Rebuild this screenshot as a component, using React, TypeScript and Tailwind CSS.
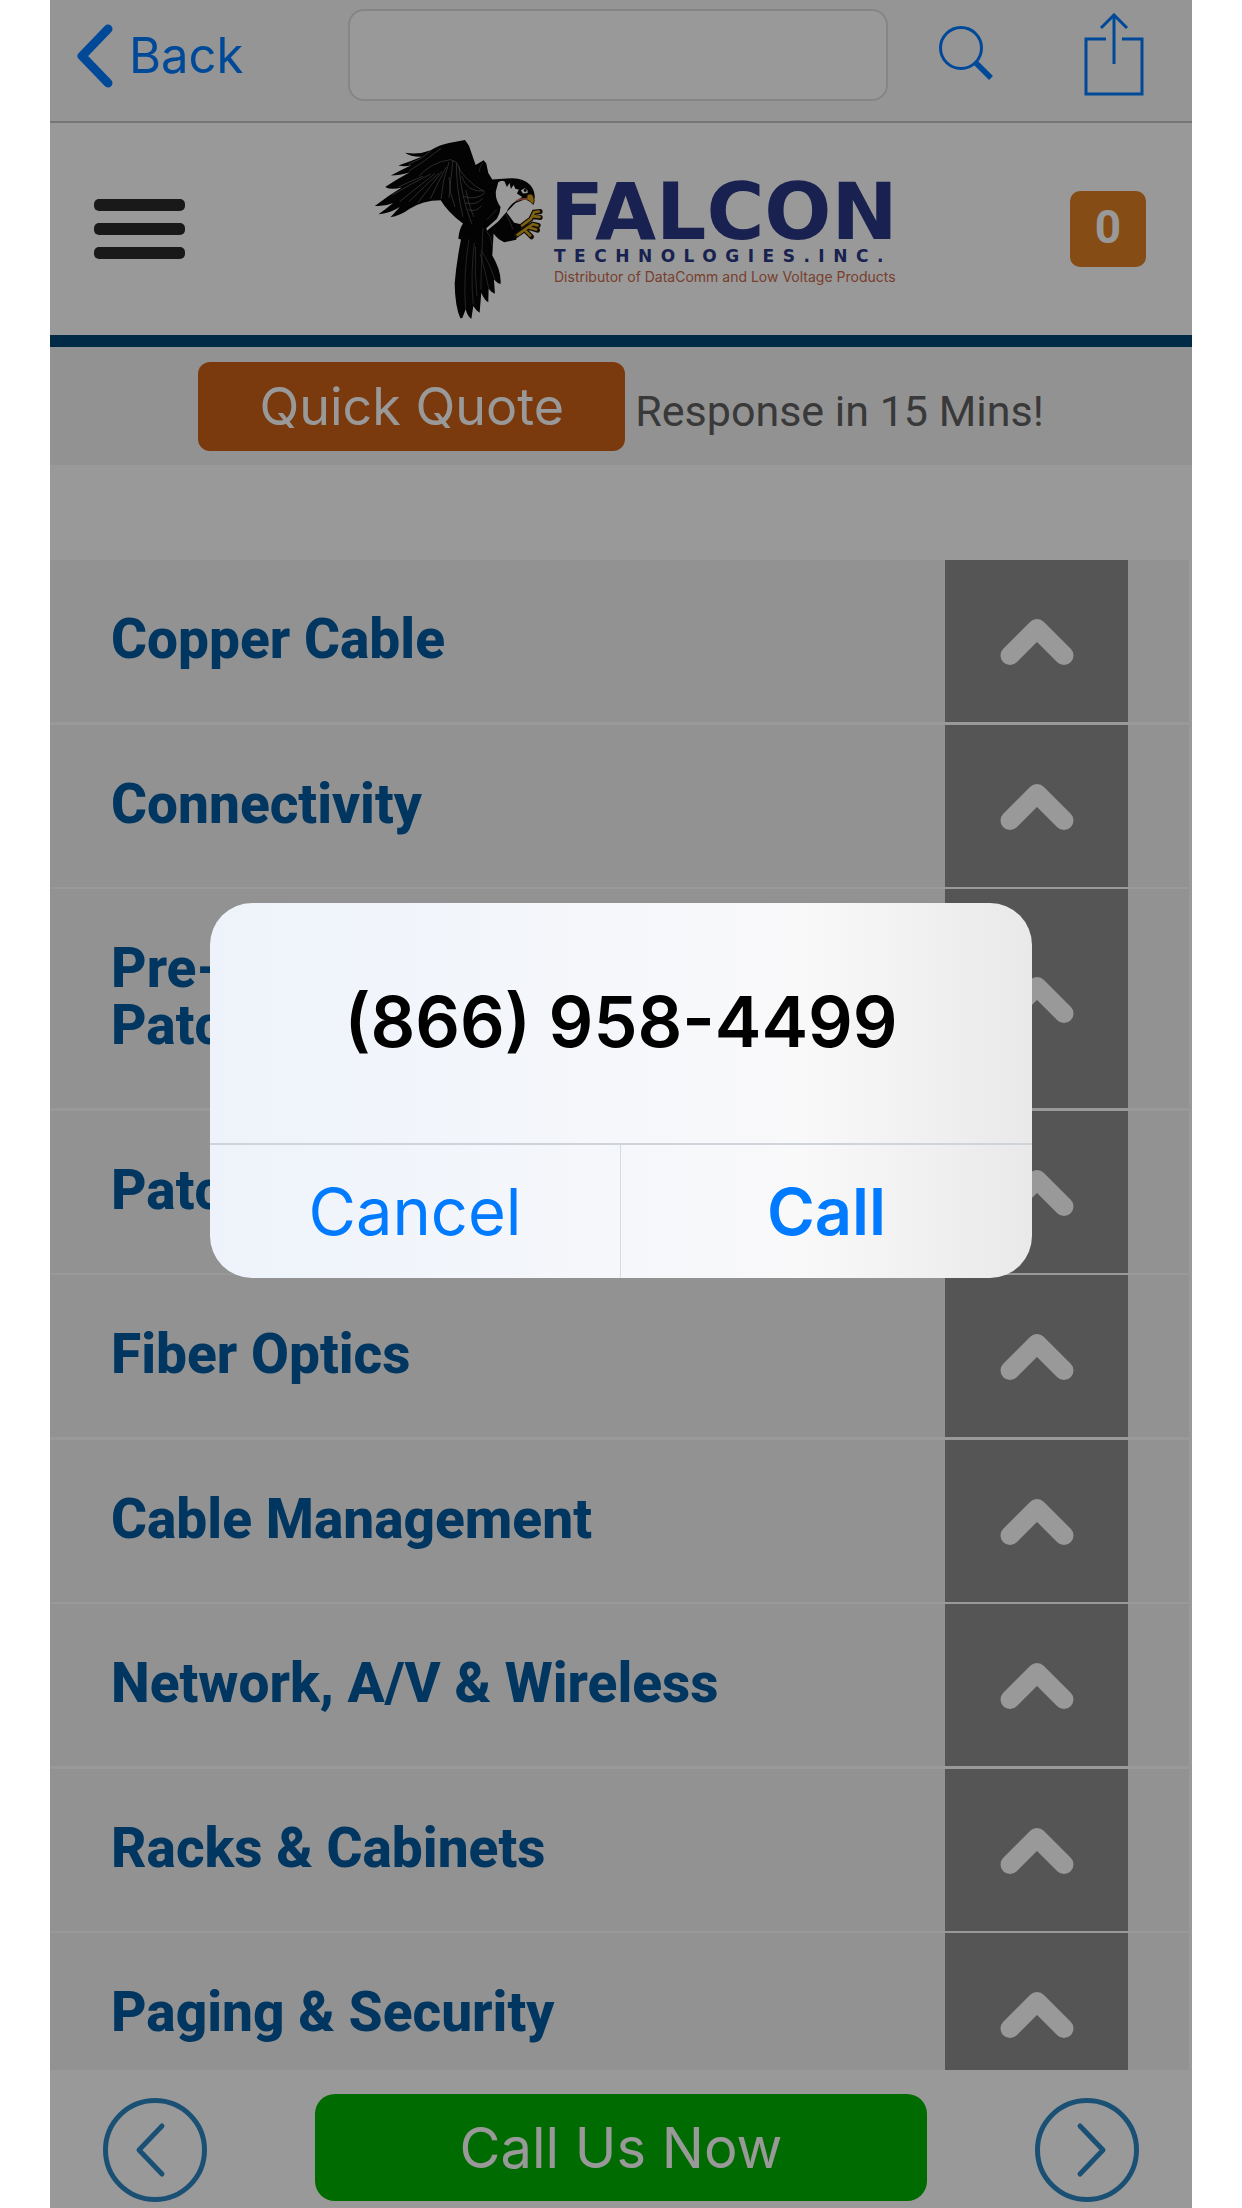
import React from "react";

const categories: string[][] = [
  ["Copper Cable"],
  ["Connectivity"],
  ["Pre-", "Patch"],
  ["Patch"],
  ["Fiber Optics"],
  ["Cable Management"],
  ["Network, A/V & Wireless"],
  ["Racks & Cabinets"],
  ["Paging & Security"],
];

function BrowserBar() {
  return (
    <div className="flex h-[123px] shrink-0 items-start border-b-2 border-[#c4c4c4] bg-[#f8f8f8] pl-[25px] pr-[48px] text-[#007aff]">
      <button type="button" className="flex w-[273px] items-center gap-4 pt-[23px] text-left font-['Inter',sans-serif] text-[49px] leading-[66px]">
        <svg viewBox="0 0 38 66" className="h-[66px] w-[38px]" fill="none" stroke="currentColor" strokeWidth="9" strokeLinecap="round" strokeLinejoin="round" aria-hidden="true">
          <path d="M33 6 L7 33 L33 60" />
        </svg>
        <span>Back</span>
      </button>
      <input
        type="text"
        aria-label="Address"
        className="mt-[9px] h-[92px] min-w-0 flex-1 rounded-[16px] border-2 border-[#dedede] bg-white px-6 text-[40px] outline-none"
      />
      <button type="button" aria-label="Search" className="ml-[50px] pt-[25px]">
        <svg viewBox="0 0 56 56" className="size-[56px]" fill="none" stroke="currentColor" aria-hidden="true">
          <circle cx="23" cy="23" r="20.5" strokeWidth="3" />
          <path d="M37 37 L53 53" strokeWidth="5.5" />
        </svg>
      </button>
      <button type="button" aria-label="Share" className="ml-[90px] pt-[13px]">
        <svg viewBox="0 0 60 84" className="h-[84px] w-[60px]" fill="none" stroke="currentColor" strokeWidth="3" aria-hidden="true">
          <path d="M22 26 H2 V81 H58 V26 H38" />
          <path d="M30 51 V3" />
          <path d="M17 15 L30 2 L43 15" />
        </svg>
      </button>
    </div>
  );
}

function Falcon() {
  return (
    <svg viewBox="45 28 510 544" className="h-[181px] w-[170px] shrink-0" aria-hidden="true">
      <path
        fill="#050505"
        d="M318 31 L270 40 Q240 46 215 62 Q180 76 138 69 Q155 82 188 81 Q150 96 118 108 Q140 112 158 106 Q120 124 95 138 Q120 138 152 128 Q112 150 78 172 Q95 182 128 174 Q85 200 47 229 Q75 232 102 220 Q78 240 58 254 Q90 252 122 232 Q106 250 94 263 Q122 260 152 238 Q190 212 245 212 Q268 250 312 282 Q300 300 298 328 L306 330 Q292 400 287 462 Q288 530 304 567 L310 566 L320 540 Q326 562 337 569 L343 530 Q352 545 362 550 L367 490 Q376 512 388 519 L389 478 Q398 490 408 493 L405 450 Q416 462 425 464 Q428 425 400 378 L404 312 Q416 330 436 338 L472 331 L476 308 L490 304 L486 284 L466 280 L450 258 L443 248 L470 220 L500 208 L528 206 Q528 182 514 166 Q492 144 456 146 L400 150 L388 130 L382 102 L374 92 L350 106 L330 48 Z"
      />
      <path
        fill="#fff"
        d="M418 158 Q428 150 437 156 L444 172 L452 160 L456 178 L464 166 L470 178 L480 180 L474 192 L490 202 L476 212 Q452 224 444 246 Q430 262 418 276 L384 304 L382 296 L414 268 Q424 250 425 232 Q408 210 411 184 Z"
      />
      <path fill="#fff" d="M486 182 L498 176 L506 182 L506 190 L492 192 Z" />
      <circle cx="499" cy="183" r="4.5" fill="#050505" />
      <path fill="#d99b1c" stroke="#3a2a0a" strokeWidth="3" d="M505 197 Q518 188 524 202 Q529 214 523 225 Q515 214 503 210 Z" />
      <path fill="none" stroke="#c46a50" strokeWidth="5" d="M472 214 Q488 205 505 209" />
      <path
        fill="none"
        stroke="#1b1405"
        strokeWidth="15"
        strokeLinecap="round"
        d="M490 288 L516 268 L526 248 L544 246 M520 260 L544 264 M472 318 L504 296 L522 284 L538 288 M510 294 L536 302 M500 304 L518 322"
      />
      <path
        fill="none"
        stroke="#d0a01f"
        strokeWidth="8"
        strokeLinecap="round"
        d="M490 288 L516 268 L526 248 L540 246 M520 260 L542 262 M476 316 L504 296 L522 284 L536 288 M510 294 L532 300 M500 304 L514 318"
      />
      <path fill="none" stroke="#6a6a6a" strokeWidth="2" d="M180 140 Q215 98 275 90 L292 98 Q310 150 376 186 M282 92 Q276 140 270 205 M292 100 Q292 180 312 262 M300 110 Q306 200 338 282 M308 140 Q324 190 376 184 M270 98 Q250 150 246 208 M262 112 Q236 160 214 208 M250 124 Q214 170 176 220 M240 130 Q196 170 150 216 M228 132 Q176 172 122 216 M214 134 Q160 160 100 196 M192 140 Q160 152 118 172 M215 64 Q184 92 148 104 M246 56 Q196 96 150 124 M270 142 Q270 190 288 232 M320 180 Q330 230 344 262 M312 200 Q350 214 378 190 M318 220 Q350 230 372 206 M326 240 Q352 250 368 228" />
      <path fill="none" stroke="#565656" strokeWidth="2" d="M372 98 Q362 112 360 126 M372 296 L370 350 Q366 420 366 480 M366 362 Q392 400 408 452 M364 372 Q380 430 390 480 M330 330 Q312 440 320 540 M346 340 Q334 440 343 525 M350 352 Q346 430 354 500 M440 252 Q452 270 462 300 M384 306 Q398 322 400 350 M384 270 Q400 256 414 240" />
    </svg>
  );
}

function SiteHeader() {
  return (
    <header className="flex h-[224px] shrink-0 items-center justify-between border-b-12 border-[#034677] bg-white pl-[44px] pr-[46px]">
      <button type="button" aria-label="Menu" className="flex w-[102px] flex-col gap-3">
        <span className="h-3 w-[91px] rounded-[5px] bg-[#2a2a2a]" />
        <span className="h-3 w-[91px] rounded-[5px] bg-[#2a2a2a]" />
        <span className="h-3 w-[91px] rounded-[5px] bg-[#2a2a2a]" />
      </button>
      <a href="#home" aria-label="Falcon Technologies home" className="flex w-[518px] items-center gap-[10px]">
        <Falcon />
        <span className="flex flex-col whitespace-nowrap pt-2 text-[#283784]">
          <span className="-ml-1 font-['DejaVu_Sans'] text-[79px] font-bold leading-[66px]">FALCON</span>
          <span className="font-['DejaVu_Sans'] text-[17px] font-bold leading-[22px] tracking-[0.5em]">TECHNOLOGIES.INC.</span>
          <span className="font-['Inter'] text-[14px] leading-[20px] text-[#c8694b]">Distributor of DataComm and Low Voltage Products</span>
        </span>
      </a>
      <button type="button" aria-label="Cart, 0 items" className="h-[76px] w-[76px] rounded-[10px] bg-[#e07f25] pb-1 font-['Roboto'] text-[46px] font-bold text-white">
        0
      </button>
    </header>
  );
}

function QuoteStrip() {
  return (
    <div className="flex h-[118px] shrink-0 items-center justify-center gap-[10px] bg-[#f3f3f3]">
      <button type="button" className="h-[89px] w-[427px] rounded-[12px] bg-[#cc6118] pt-[2px] font-['Inter',sans-serif] text-[52px] leading-none text-white">
        Quick Quote
      </button>
      <p className="pt-[10px] font-['Roboto'] text-[43px] leading-[60px] text-[#606060]">Response in 15 Mins!</p>
    </div>
  );
}

function CategoryRow({ lines }: { lines: string[] }) {
  return (
    <li className="flex border-white bg-[#f3f3f3] pr-[61px] odd:border-b-3 even:border-b-2">
      <a href="#category" className="min-w-0 flex-1 pb-[54px] pl-[61px] pt-[51px] font-['Roboto'] text-[55px] font-extrabold leading-[57px] text-[#035aa0]">
        {lines.map((line) => (
          <span key={line} className="block">{line}</span>
        ))}
      </a>
      <button type="button" aria-label={"Expand " + lines.join(" ")} className="flex w-[183px] shrink-0 items-center justify-center bg-[#8e8e8e] pt-[2px]">
        <svg viewBox="0 0 74 46" className="h-[46px] w-[74px]" fill="none" stroke="#fff" strokeWidth="19" strokeLinecap="round" strokeLinejoin="round" aria-hidden="true">
          <path d="M10 36.5 L37 9.5 L64 36.5" />
        </svg>
      </button>
    </li>
  );
}

function RoundArrow({ label, d }: { label: string; d: string }) {
  return (
    <button type="button" aria-label={label} className="mt-7 size-[104px] shrink-0 text-[#2d86c4]">
      <svg viewBox="0 0 104 104" className="size-full" fill="none" stroke="currentColor" aria-hidden="true">
        <circle cx="52" cy="52" r="49.5" strokeWidth="5" />
        <path d={d} strokeWidth="5" strokeLinecap="round" strokeLinejoin="round" />
      </svg>
    </button>
  );
}

function CallDialog() {
  return (
    <div className="fixed inset-0 flex items-center justify-center px-[50px] pb-[28px]">
      <div
        role="alertdialog"
        aria-labelledby="phone"
        className="w-full max-w-[822px] overflow-hidden rounded-[42px] bg-linear-to-r from-[#eef3fb] via-[#f9f9fa] via-72% to-[#e9e9e9] font-['Inter',sans-serif]"
      >
        <h2 id="phone" className="flex h-[240px] items-center justify-center pb-[2px] text-[70px] font-semibold leading-none text-black">
          (866) 958-4499
        </h2>
        <div className="grid h-[135px] grid-cols-2 border-t-2 border-[#cfd3da] text-[65px] leading-none text-[#007aff]">
          <button type="button" className="border-r border-[#d6dae3]">Cancel</button>
          <button type="button" className="font-semibold">Call</button>
        </div>
      </div>
    </div>
  );
}

export default function App() {
  return (
    <div className="h-screen bg-white px-[50px]">
      <div className="relative flex h-full flex-col overflow-hidden bg-white">
        <BrowserBar />
        <SiteHeader />
        <QuoteStrip />
        <ul className="mr-[3px] mt-[95px] min-h-0 flex-1 overflow-hidden">
          {categories.map((lines, index) => (
            <CategoryRow key={index} lines={lines} />
          ))}
        </ul>
        <footer className="flex h-[138px] shrink-0 items-start justify-between bg-white px-[53px]">
          <RoundArrow label="Previous" d="M59 28 L36 52 L59 76" />
          <a href="tel:8669584499" className="mt-6 flex h-[107px] w-[612px] items-center justify-center rounded-[20px] bg-[#00b300] font-['Inter',sans-serif] text-[56px] leading-none text-white">
            Call Us Now
          </a>
          <RoundArrow label="Next" d="M45 28 L68 52 L45 76" />
        </footer>
        <div className="pointer-events-none absolute inset-0 bg-black/40" />
      </div>
      <CallDialog />
    </div>
  );
}
